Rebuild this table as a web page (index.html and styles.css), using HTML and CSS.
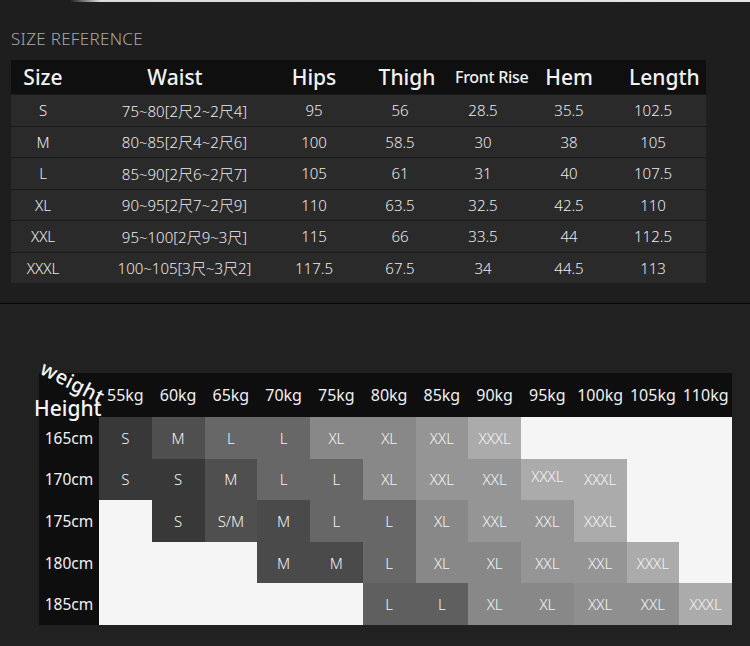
FILE: index.html
```html
<!DOCTYPE html>
<html>
<head>
<meta charset="utf-8">
<link rel="stylesheet" href="styles.css">
</head>
<body>
<div class="top-line"></div>
<section class="sizes">
  <div class="title">SIZE REFERENCE</div>
  <div class="table">
    <div class="row head">
      <div class="c">Size</div><div class="c">Waist</div><div class="c">Hips</div><div class="c sh7">Thigh</div><div class="c small sh4">Front Rise</div><div class="c">Hem</div><div class="c sh5">Length</div>
    </div>
    <div class="row"><div class="c">S</div><div class="c">75~80[2尺2~2尺4]</div><div class="c">95</div><div class="c">56</div><div class="c">28.5</div><div class="c">35.5</div><div class="c">102.5</div></div>
    <div class="row"><div class="c">M</div><div class="c">80~85[2尺4~2尺6]</div><div class="c">100</div><div class="c">58.5</div><div class="c">30</div><div class="c">38</div><div class="c">105</div></div>
    <div class="row"><div class="c">L</div><div class="c">85~90[2尺6~2尺7]</div><div class="c">105</div><div class="c">61</div><div class="c">31</div><div class="c">40</div><div class="c">107.5</div></div>
    <div class="row"><div class="c">XL</div><div class="c">90~95[2尺7~2尺9]</div><div class="c">110</div><div class="c">63.5</div><div class="c">32.5</div><div class="c">42.5</div><div class="c">110</div></div>
    <div class="row"><div class="c">XXL</div><div class="c">95~100[2尺9~3尺]</div><div class="c">115</div><div class="c">66</div><div class="c">33.5</div><div class="c">44</div><div class="c">112.5</div></div>
    <div class="row"><div class="c">XXXL</div><div class="c">100~105[3尺~3尺2]</div><div class="c">117.5</div><div class="c">67.5</div><div class="c">34</div><div class="c">44.5</div><div class="c">113</div></div>
  </div>
</section>
<section class="chart-sec">
  <div class="chart">
    <div class="lbl-weight">weight</div>
    <div class="lbl-height">Height</div>
    <div class="hd corner"></div>
    <div class="hd">55kg</div><div class="hd">60kg</div><div class="hd">65kg</div><div class="hd">70kg</div><div class="hd">75kg</div><div class="hd">80kg</div><div class="hd">85kg</div><div class="hd">90kg</div><div class="hd">95kg</div><div class="hd">100kg</div><div class="hd">105kg</div><div class="hd">110kg</div>

    <div class="rl">165cm</div>
    <div class="k g1">S</div><div class="k g2">M</div><div class="k g3">L</div><div class="k g3">L</div><div class="k g5">XL</div><div class="k g5">XL</div><div class="k g6">XXL</div><div class="k g8">XXXL</div><div class="k w"></div><div class="k w"></div><div class="k w"></div><div class="k w"></div>

    <div class="rl">170cm</div>
    <div class="k g1">S</div><div class="k g1">S</div><div class="k g2">M</div><div class="k g3">L</div><div class="k g3">L</div><div class="k g5">XL</div><div class="k g6">XXL</div><div class="k g6">XXL</div><div class="k g8 up">XXXL</div><div class="k g8">XXXL</div><div class="k w"></div><div class="k w"></div>

    <div class="rl">175cm</div>
    <div class="k w"></div><div class="k g1">S</div><div class="k g2">S/M</div><div class="k g2b">M</div><div class="k g3">L</div><div class="k g3">L</div><div class="k g5">XL</div><div class="k g6">XXL</div><div class="k g6">XXL</div><div class="k g8">XXXL</div><div class="k w"></div><div class="k w"></div>

    <div class="rl">180cm</div>
    <div class="k w"></div><div class="k w"></div><div class="k w"></div><div class="k g2b">M</div><div class="k g2b">M</div><div class="k g3">L</div><div class="k g5">XL</div><div class="k g5">XL</div><div class="k g6">XXL</div><div class="k g6">XXL</div><div class="k g8">XXXL</div><div class="k w"></div>

    <div class="rl">185cm</div>
    <div class="k w"></div><div class="k w"></div><div class="k w"></div><div class="k w"></div><div class="k w"></div><div class="k g3b">L</div><div class="k g3b">L</div><div class="k g5">XL</div><div class="k g5">XL</div><div class="k g6b">XXL</div><div class="k g6b">XXL</div><div class="k g8">XXXL</div>
  </div>
</section>
</body>
</html>
```
FILE: styles.css
```css
* { box-sizing: border-box; }
html, body { margin: 0; padding: 0; }
body {
  width: 750px;
  height: 646px;
  overflow: hidden;
  background: #212121;
  font-family: "Noto Sans", "Noto Sans CJK SC", sans-serif;
  color: #ededed;
}
.top-line {
  height: 2px;
  background: linear-gradient(90deg, #1e1e1e 0, #1e1e1e 70px, #dcdcdc 100px, #e6e6e6 100%);
}
.sizes {
  height: 302px;
  background: #1e1e1e;
  padding: 26px 0 0 11px;
  border-bottom: 1px solid #080808;
}
.title {
  font-size: 17px;
  line-height: 21px;
  color: #a8a8a8;
  letter-spacing: 0.3px;
  font-weight: 300;
}
.table {
  margin-top: 11px;
  width: 695px;
  background: #2a2a2a;
}
.row {
  display: grid;
  grid-template-columns: 64px 200px 78px 94px 72px 100px 68px 19px;
  height: 31.5px;
  align-items: center;
  border-top: 1px solid #1b1b1b;
  font-size: 15px;
  font-weight: 300;
  color: #ececec;
}
.row .c { text-align: center; white-space: nowrap; }
.row:not(.head) .c:nth-child(2) { padding-left: 19px; }
.row.head {
  height: 34px;
  border-top: 0;
  background: #0f0f0f;
  font-size: 21px;
  font-weight: 500;
  color: #f2f2f2;
}
.row.head .small { font-size: 16px; font-weight: 500; letter-spacing: -0.3px; }
.row.head .sh7 { padding-left: 14px; }
.row.head .sh4 { padding-left: 8px; }
.row.head .sh5 { padding-left: 10px; }

.chart-sec {
  height: 343px;
  padding: 69px 0 0 39px;
}
.chart {
  position: relative;
  width: 693px;
  display: grid;
  grid-template-columns: 60px repeat(12, 52.75px);
  grid-template-rows: 44px repeat(5, 41.6px);
}
.hd {
  background: #0e0e0e;
  display: flex;
  align-items: center;
  justify-content: center;
  font-size: 16px;
  color: #f0f0f0;
  white-space: nowrap;
}
.rl {
  background: #0e0e0e;
  display: flex;
  align-items: center;
  justify-content: center;
  font-size: 15.5px;
  color: #f2f2f2;
}
.k {
  display: flex;
  align-items: center;
  justify-content: center;
  font-size: 15px;
  color: #f3f3f3;
  font-weight: 300;
}
.k.up { padding-bottom: 6px; }
.w { background: #f5f5f5; }
.g1 { background: #383838; }
.g2 { background: #4f4f4f; }
.g2b { background: #4a4a4a; }
.g3 { background: #676767; }
.g3b { background: #5f5f5f; }
.g5 { background: #888888; }
.g6 { background: #959595; }
.g6b { background: #8f8f8f; }
.g8 { background: #ababab; }

.lbl-weight {
  position: absolute;
  left: 3px;
  top: -16px;
  font-size: 20px;
  font-weight: 500;
  color: #f6f6f6;
  transform: rotate(27deg);
  transform-origin: 0 50%;
  line-height: 20px;
  letter-spacing: 0.5px;
}
.lbl-height {
  position: absolute;
  left: -5px;
  top: 22px;
  font-size: 21px;
  font-weight: 500;
  line-height: 26px;
  color: #f6f6f6;
}
```
